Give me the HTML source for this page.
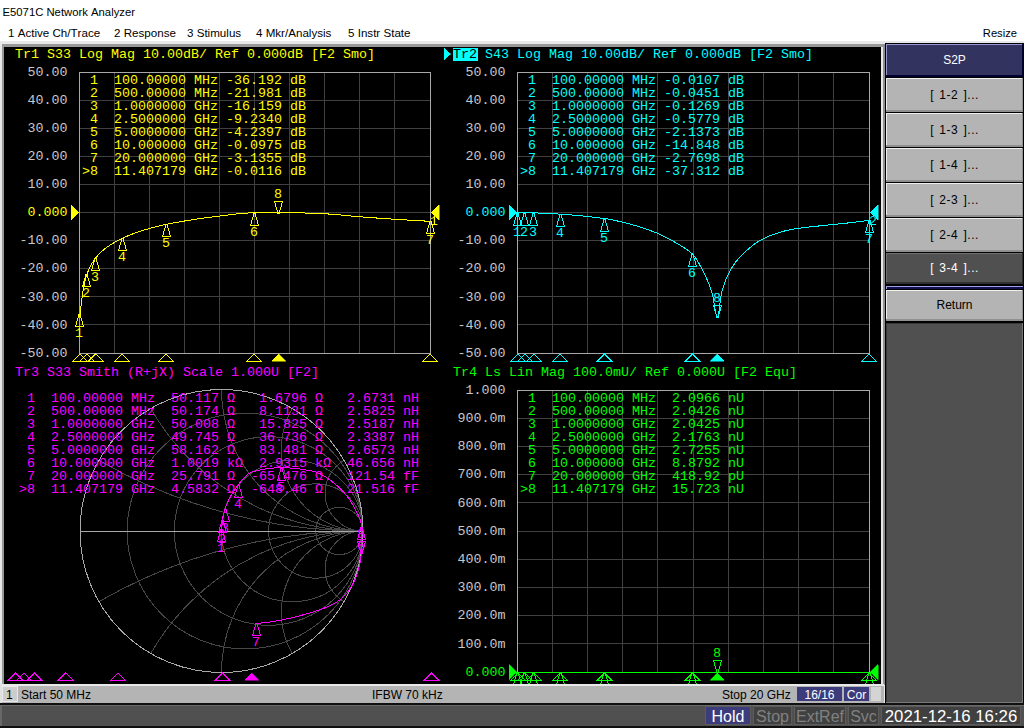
<!DOCTYPE html>
<html><head><meta charset="utf-8"><style>
html,body{margin:0;padding:0;background:#fff;width:1024px;height:728px;overflow:hidden}
svg{display:block}
text{font-kerning:none}
</style></head><body><svg width="1024" height="728" viewBox="0 0 1024 728" shape-rendering="crispEdges"><rect x="0" y="0" width="1024" height="728" fill="#ffffff" />
<rect x="0" y="41" width="1024" height="687" fill="#e8e8e8" />
<rect x="2" y="44" width="882" height="641" fill="#989898" />
<rect x="4" y="47" width="877" height="637" fill="#000000" />
<text x="2.5" y="16" fill="#000000" font-family="'Liberation Sans', sans-serif" font-size="11.3" text-anchor="start" xml:space="preserve" >E5071C Network Analyzer</text>
<text x="8" y="37" fill="#000000" font-family="'Liberation Sans', sans-serif" font-size="11.6" text-anchor="start" xml:space="preserve" >1 Active Ch/Trace</text>
<text x="114" y="37" fill="#000000" font-family="'Liberation Sans', sans-serif" font-size="11.6" text-anchor="start" xml:space="preserve" >2 Response</text>
<text x="187" y="37" fill="#000000" font-family="'Liberation Sans', sans-serif" font-size="11.6" text-anchor="start" xml:space="preserve" >3 Stimulus</text>
<text x="256" y="37" fill="#000000" font-family="'Liberation Sans', sans-serif" font-size="11.6" text-anchor="start" xml:space="preserve" >4 Mkr/Analysis</text>
<text x="348" y="37" fill="#000000" font-family="'Liberation Sans', sans-serif" font-size="11.6" text-anchor="start" xml:space="preserve" >5 Instr State</text>
<text x="1017" y="37" fill="#000000" font-family="'Liberation Sans', sans-serif" font-size="11.2" text-anchor="end" xml:space="preserve" >Resize</text>
<defs><clipPath id="clipdisp"><rect x="4" y="47" width="877" height="637"/></clipPath></defs>
<text x="15" y="58" fill="#ffff00" font-family="'Liberation Mono', monospace" font-size="13.333" text-anchor="start" xml:space="preserve" >Tr1 S33 Log Mag 10.00dB/ Ref 0.000dB [F2 Smo]</text>
<rect x="114" y="72" width="1" height="281" fill="#404040" />
<rect x="79" y="100" width="351" height="1" fill="#404040" />
<rect x="149" y="72" width="1" height="281" fill="#404040" />
<rect x="79" y="128" width="351" height="1" fill="#404040" />
<rect x="184" y="72" width="1" height="281" fill="#404040" />
<rect x="79" y="156" width="351" height="1" fill="#404040" />
<rect x="219" y="72" width="1" height="281" fill="#404040" />
<rect x="79" y="184" width="351" height="1" fill="#404040" />
<rect x="254" y="72" width="1" height="281" fill="#404040" />
<rect x="79" y="212" width="351" height="1" fill="#404040" />
<rect x="289" y="72" width="1" height="281" fill="#404040" />
<rect x="79" y="240" width="351" height="1" fill="#404040" />
<rect x="324" y="72" width="1" height="281" fill="#404040" />
<rect x="79" y="268" width="351" height="1" fill="#404040" />
<rect x="359" y="72" width="1" height="281" fill="#404040" />
<rect x="79" y="296" width="351" height="1" fill="#404040" />
<rect x="394" y="72" width="1" height="281" fill="#404040" />
<rect x="79" y="324" width="351" height="1" fill="#404040" />
<rect x="79" y="72" width="352" height="1" fill="#a8a8a8" />
<rect x="79" y="353" width="352" height="1" fill="#a8a8a8" />
<rect x="79" y="72" width="1" height="281" fill="#a8a8a8" />
<rect x="430" y="72" width="1" height="282" fill="#a8a8a8" />
<text x="67.5" y="75.7" fill="#c8c8c8" font-family="'Liberation Mono', monospace" font-size="13.333" text-anchor="end" xml:space="preserve" >50.00</text>
<text x="67.5" y="103.8" fill="#c8c8c8" font-family="'Liberation Mono', monospace" font-size="13.333" text-anchor="end" xml:space="preserve" >40.00</text>
<text x="67.5" y="131.89999999999998" fill="#c8c8c8" font-family="'Liberation Mono', monospace" font-size="13.333" text-anchor="end" xml:space="preserve" >30.00</text>
<text x="67.5" y="160.0" fill="#c8c8c8" font-family="'Liberation Mono', monospace" font-size="13.333" text-anchor="end" xml:space="preserve" >20.00</text>
<text x="67.5" y="188.1" fill="#c8c8c8" font-family="'Liberation Mono', monospace" font-size="13.333" text-anchor="end" xml:space="preserve" >10.00</text>
<text x="67.5" y="216.2" fill="#ffff00" font-family="'Liberation Mono', monospace" font-size="13.333" text-anchor="end" xml:space="preserve" >0.000</text>
<text x="67.5" y="244.29999999999998" fill="#c8c8c8" font-family="'Liberation Mono', monospace" font-size="13.333" text-anchor="end" xml:space="preserve" >-10.00</text>
<text x="67.5" y="272.4" fill="#c8c8c8" font-family="'Liberation Mono', monospace" font-size="13.333" text-anchor="end" xml:space="preserve" >-20.00</text>
<text x="67.5" y="300.5" fill="#c8c8c8" font-family="'Liberation Mono', monospace" font-size="13.333" text-anchor="end" xml:space="preserve" >-30.00</text>
<text x="67.5" y="328.59999999999997" fill="#c8c8c8" font-family="'Liberation Mono', monospace" font-size="13.333" text-anchor="end" xml:space="preserve" >-40.00</text>
<text x="67.5" y="356.7" fill="#c8c8c8" font-family="'Liberation Mono', monospace" font-size="13.333" text-anchor="end" xml:space="preserve" >-50.00</text>
<polygon points="71.00,205.00 71.00,220.00 79.00,212.50" fill="#ffff00" stroke="#ffff00" stroke-width="0.5"/>
<polygon points="439.00,205.00 439.00,220.00 431.00,212.50" fill="#ffff00" stroke="#ffff00" stroke-width="0.5"/>
<clipPath id="tri79"><polygon points="439,205.0 439,220.0 431,212.5"/></clipPath>
<mask id="mtri79"><rect x="0" y="0" width="1024" height="728" fill="#fff"/><polygon points="439,205.0 439,220.0 431,212.5" fill="#000"/></mask>
<text x="430" y="225.0" fill="#ffff00" font-family="'Liberation Mono', monospace" font-size="13.333" text-anchor="start" xml:space="preserve" mask="url(#mtri79)">1</text>
<text x="430" y="225.0" fill="#000000" font-family="'Liberation Mono', monospace" font-size="13.333" text-anchor="start" xml:space="preserve" clip-path="url(#tri79)">1</text>
<g clip-path="url(#clipdisp)">
<polyline points="79.00,316.47 79.50,315.38 80.00,313.75 80.50,310.57 81.00,306.54 81.50,302.40 82.00,298.44 82.50,294.76 83.00,291.40 83.50,288.34 84.00,285.58 84.50,283.10 85.00,280.86 85.50,278.86 86.00,277.07 86.50,275.47 87.00,274.04 87.50,272.72 88.00,271.47 88.50,270.28 89.00,269.15 89.50,268.07 90.00,267.04 90.50,266.06 91.00,265.12 91.50,264.22 92.00,263.35 92.50,262.53 93.00,261.73 93.50,260.97 94.00,260.23 94.50,259.52 95.00,258.84 95.50,258.18 96.00,257.55 96.50,256.93 97.00,256.34 97.50,255.76 98.00,255.20 98.50,254.65 99.00,254.12 99.50,253.61 100.00,253.11 100.50,252.62 101.00,252.14 101.50,251.68 102.00,251.22 102.50,250.78 103.00,250.35 103.50,249.92 104.00,249.51 104.50,249.10 105.00,248.71 105.50,248.32 106.00,247.94 106.50,247.56 107.00,247.19 107.50,246.83 108.00,246.48 108.50,246.13 109.00,245.79 109.50,245.46 110.00,245.13 110.50,244.80 111.00,244.48 111.50,244.17 112.00,243.86 112.50,243.55 113.00,243.25 113.50,242.96 114.00,242.67 114.50,242.38 115.00,242.10 115.50,241.82 116.00,241.54 116.50,241.27 117.00,241.00 117.50,240.74 118.00,240.48 118.50,240.22 119.00,239.96 119.50,239.71 120.00,239.46 120.50,239.22 121.00,238.97 121.50,238.73 122.00,238.50 122.50,238.26 123.00,238.03 123.50,237.80 124.00,237.57 124.50,237.35 125.00,237.13 125.50,236.90 126.00,236.69 126.50,236.47 127.00,236.26 127.50,236.05 128.00,235.84 128.50,235.63 129.00,235.42 129.50,235.22 130.00,235.02 130.50,234.82 131.00,234.62 131.50,234.43 132.00,234.23 132.50,234.04 133.00,233.85 133.50,233.66 134.00,233.48 134.50,233.29 135.00,233.11 135.50,232.93 136.00,232.75 136.50,232.57 137.00,232.40 137.50,232.22 138.00,232.05 138.50,231.88 139.00,231.71 139.50,231.54 140.00,231.37 140.50,231.21 141.00,231.05 141.50,230.88 142.00,230.72 142.50,230.56 143.00,230.41 143.50,230.25 144.00,230.10 144.50,229.94 145.00,229.79 145.50,229.64 146.00,229.49 146.50,229.34 147.00,229.19 147.50,229.05 148.00,228.90 148.50,228.76 149.00,228.62 149.50,228.48 150.00,228.34 150.50,228.20 151.00,228.06 151.50,227.93 152.00,227.79 152.50,227.66 153.00,227.53 153.50,227.40 154.00,227.26 154.50,227.14 155.00,227.01 155.50,226.88 156.00,226.75 156.50,226.63 157.00,226.50 157.50,226.38 158.00,226.26 158.50,226.14 159.00,226.02 159.50,225.90 160.00,225.78 160.50,225.66 161.00,225.55 161.50,225.43 162.00,225.32 162.50,225.20 163.00,225.09 163.50,224.98 164.00,224.87 164.50,224.76 165.00,224.65 165.50,224.54 166.00,224.43 166.50,224.33 167.00,224.22 167.50,224.12 168.00,224.01 168.50,223.91 169.00,223.81 169.50,223.71 170.00,223.61 170.50,223.51 171.00,223.41 171.50,223.32 172.00,223.22 172.50,223.13 173.00,223.03 173.50,222.94 174.00,222.85 174.50,222.75 175.00,222.66 175.50,222.57 176.00,222.48 176.50,222.39 177.00,222.30 177.50,222.21 178.00,222.12 178.50,222.03 179.00,221.95 179.50,221.86 180.00,221.77 180.50,221.68 181.00,221.60 181.50,221.51 182.00,221.43 182.50,221.34 183.00,221.26 183.50,221.17 184.00,221.09 184.50,221.01 185.00,220.92 185.50,220.84 186.00,220.76 186.50,220.68 187.00,220.59 187.50,220.51 188.00,220.43 188.50,220.35 189.00,220.27 189.50,220.19 190.00,220.11 190.50,220.03 191.00,219.96 191.50,219.88 192.00,219.80 192.50,219.72 193.00,219.65 193.50,219.57 194.00,219.49 194.50,219.42 195.00,219.34 195.50,219.27 196.00,219.19 196.50,219.12 197.00,219.05 197.50,218.97 198.00,218.90 198.50,218.83 199.00,218.76 199.50,218.68 200.00,218.61 200.50,218.54 201.00,218.47 201.50,218.40 202.00,218.33 202.50,218.26 203.00,218.19 203.50,218.12 204.00,218.06 204.50,217.99 205.00,217.92 205.50,217.85 206.00,217.79 206.50,217.72 207.00,217.65 207.50,217.59 208.00,217.52 208.50,217.46 209.00,217.39 209.50,217.33 210.00,217.26 210.50,217.20 211.00,217.14 211.50,217.08 212.00,217.01 212.50,216.95 213.00,216.89 213.50,216.83 214.00,216.77 214.50,216.71 215.00,216.65 215.50,216.59 216.00,216.53 216.50,216.47 217.00,216.41 217.50,216.35 218.00,216.29 218.50,216.23 219.00,216.17 219.50,216.11 220.00,216.05 220.50,215.99 221.00,215.93 221.50,215.87 222.00,215.80 222.50,215.74 223.00,215.68 223.50,215.61 224.00,215.55 224.50,215.48 225.00,215.42 225.50,215.35 226.00,215.29 226.50,215.22 227.00,215.16 227.50,215.09 228.00,215.03 228.50,214.96 229.00,214.90 229.50,214.83 230.00,214.77 230.50,214.70 231.00,214.64 231.50,214.58 232.00,214.52 232.50,214.45 233.00,214.39 233.50,214.33 234.00,214.27 234.50,214.21 235.00,214.16 235.50,214.10 236.00,214.04 236.50,213.99 237.00,213.93 237.50,213.88 238.00,213.82 238.50,213.77 239.00,213.72 239.50,213.67 240.00,213.62 240.50,213.57 241.00,213.52 241.50,213.48 242.00,213.43 242.50,213.39 243.00,213.35 243.50,213.31 244.00,213.27 244.50,213.23 245.00,213.19 245.50,213.16 246.00,213.12 246.50,213.09 247.00,213.06 247.50,213.03 248.00,213.00 248.50,212.97 249.00,212.95 249.50,212.92 250.00,212.90 250.50,212.88 251.00,212.86 251.50,212.84 252.00,212.82 252.50,212.81 253.00,212.80 253.50,212.78 254.00,212.78 254.50,212.77 255.00,212.76 255.50,212.75 256.00,212.74 256.50,212.73 257.00,212.72 257.50,212.72 258.00,212.71 258.50,212.70 259.00,212.69 259.50,212.69 260.00,212.68 260.50,212.67 261.00,212.66 261.50,212.66 262.00,212.65 262.50,212.64 263.00,212.64 263.50,212.63 264.00,212.63 264.50,212.62 265.00,212.61 265.50,212.61 266.00,212.60 266.50,212.60 267.00,212.59 267.50,212.59 268.00,212.58 268.50,212.58 269.00,212.57 269.50,212.57 270.00,212.57 270.50,212.56 271.00,212.56 271.50,212.56 272.00,212.55 272.50,212.55 273.00,212.55 273.50,212.55 274.00,212.54 274.50,212.54 275.00,212.54 275.50,212.54 276.00,212.54 276.50,212.54 277.00,212.53 277.50,212.53 278.00,212.53 278.50,212.53 279.00,212.53 279.50,212.53 280.00,212.53 280.50,212.54 281.00,212.54 281.50,212.54 282.00,212.55 282.50,212.55 283.00,212.56 283.50,212.56 284.00,212.57 284.50,212.57 285.00,212.58 285.50,212.59 286.00,212.59 286.50,212.60 287.00,212.61 287.50,212.62 288.00,212.63 288.50,212.64 289.00,212.65 289.50,212.66 290.00,212.67 290.50,212.68 291.00,212.69 291.50,212.70 292.00,212.71 292.50,212.72 293.00,212.73 293.50,212.74 294.00,212.75 294.50,212.76 295.00,212.77 295.50,212.78 296.00,212.79 296.50,212.80 297.00,212.81 297.50,212.83 298.00,212.84 298.50,212.85 299.00,212.86 299.50,212.87 300.00,212.88 300.50,212.89 301.00,212.91 301.50,212.92 302.00,212.93 302.50,212.94 303.00,212.96 303.50,212.97 304.00,212.98 304.50,213.00 305.00,213.01 305.50,213.03 306.00,213.04 306.50,213.06 307.00,213.07 307.50,213.09 308.00,213.11 308.50,213.12 309.00,213.14 309.50,213.16 310.00,213.17 310.50,213.19 311.00,213.21 311.50,213.23 312.00,213.24 312.50,213.26 313.00,213.28 313.50,213.30 314.00,213.32 314.50,213.34 315.00,213.36 315.50,213.38 316.00,213.40 316.50,213.42 317.00,213.44 317.50,213.46 318.00,213.48 318.50,213.50 319.00,213.53 319.50,213.55 320.00,213.57 320.50,213.59 321.00,213.61 321.50,213.64 322.00,213.66 322.50,213.68 323.00,213.71 323.50,213.73 324.00,213.75 324.50,213.78 325.00,213.80 325.50,213.83 326.00,213.86 326.50,213.88 327.00,213.91 327.50,213.94 328.00,213.97 328.50,214.01 329.00,214.04 329.50,214.07 330.00,214.11 330.50,214.14 331.00,214.18 331.50,214.22 332.00,214.26 332.50,214.30 333.00,214.34 333.50,214.38 334.00,214.42 334.50,214.46 335.00,214.50 335.50,214.55 336.00,214.59 336.50,214.63 337.00,214.68 337.50,214.72 338.00,214.77 338.50,214.82 339.00,214.86 339.50,214.91 340.00,214.95 340.50,215.00 341.00,215.05 341.50,215.10 342.00,215.14 342.50,215.19 343.00,215.24 343.50,215.29 344.00,215.34 344.50,215.39 345.00,215.43 345.50,215.48 346.00,215.53 346.50,215.58 347.00,215.63 347.50,215.68 348.00,215.72 348.50,215.77 349.00,215.82 349.50,215.87 350.00,215.91 350.50,215.96 351.00,216.01 351.50,216.06 352.00,216.10 352.50,216.15 353.00,216.19 353.50,216.24 354.00,216.28 354.50,216.33 355.00,216.37 355.50,216.42 356.00,216.46 356.50,216.50 357.00,216.54 357.50,216.59 358.00,216.63 358.50,216.67 359.00,216.71 359.50,216.75 360.00,216.79 360.50,216.83 361.00,216.86 361.50,216.90 362.00,216.94 362.50,216.98 363.00,217.02 363.50,217.06 364.00,217.09 364.50,217.13 365.00,217.17 365.50,217.21 366.00,217.24 366.50,217.28 367.00,217.32 367.50,217.35 368.00,217.39 368.50,217.43 369.00,217.47 369.50,217.50 370.00,217.54 370.50,217.58 371.00,217.61 371.50,217.65 372.00,217.69 372.50,217.72 373.00,217.76 373.50,217.79 374.00,217.83 374.50,217.87 375.00,217.90 375.50,217.94 376.00,217.97 376.50,218.01 377.00,218.04 377.50,218.08 378.00,218.11 378.50,218.15 379.00,218.18 379.50,218.22 380.00,218.25 380.50,218.29 381.00,218.32 381.50,218.36 382.00,218.39 382.50,218.43 383.00,218.46 383.50,218.49 384.00,218.53 384.50,218.56 385.00,218.60 385.50,218.63 386.00,218.66 386.50,218.70 387.00,218.73 387.50,218.76 388.00,218.80 388.50,218.83 389.00,218.86 389.50,218.90 390.00,218.93 390.50,218.96 391.00,219.00 391.50,219.03 392.00,219.06 392.50,219.09 393.00,219.13 393.50,219.16 394.00,219.19 394.50,219.22 395.00,219.26 395.50,219.29 396.00,219.32 396.50,219.35 397.00,219.38 397.50,219.42 398.00,219.45 398.50,219.48 399.00,219.51 399.50,219.54 400.00,219.57 400.50,219.60 401.00,219.63 401.50,219.67 402.00,219.70 402.50,219.73 403.00,219.76 403.50,219.79 404.00,219.82 404.50,219.85 405.00,219.88 405.50,219.91 406.00,219.94 406.50,219.97 407.00,220.00 407.50,220.03 408.00,220.06 408.50,220.09 409.00,220.12 409.50,220.15 410.00,220.18 410.50,220.21 411.00,220.24 411.50,220.27 412.00,220.30 412.50,220.33 413.00,220.36 413.50,220.39 414.00,220.42 414.50,220.45 415.00,220.47 415.50,220.50 416.00,220.53 416.50,220.56 417.00,220.59 417.50,220.62 418.00,220.65 418.50,220.67 419.00,220.70 419.50,220.73 420.00,220.76 420.50,220.79 421.00,220.82 421.50,220.84 422.00,220.87 422.50,220.90 423.00,220.93 423.50,220.96 424.00,220.98 424.50,221.01 425.00,221.04 425.50,221.07 426.00,221.09 426.50,221.12 427.00,221.15 427.50,221.18 428.00,221.20 428.50,221.23 429.00,221.26 429.50,221.28 430.00,221.31" fill="none" stroke="#ffff00" stroke-width="1" />
</g>
<polygon points="79.00,314.50 80.00,314.50 83.50,326.50 75.50,326.50" fill="none" stroke="#ffff00" stroke-width="1"/>
<text x="79" y="337" fill="#ffff00" font-family="'Liberation Mono', monospace" font-size="13.333" text-anchor="middle" xml:space="preserve" >1</text>
<polygon points="86.00,274.50 87.00,274.50 90.50,286.50 82.50,286.50" fill="none" stroke="#ffff00" stroke-width="1"/>
<text x="86" y="297" fill="#ffff00" font-family="'Liberation Mono', monospace" font-size="13.333" text-anchor="middle" xml:space="preserve" >2</text>
<polygon points="95.00,258.50 96.00,258.50 99.50,270.50 91.50,270.50" fill="none" stroke="#ffff00" stroke-width="1"/>
<text x="95" y="281" fill="#ffff00" font-family="'Liberation Mono', monospace" font-size="13.333" text-anchor="middle" xml:space="preserve" >3</text>
<polygon points="122.00,238.50 123.00,238.50 126.50,250.50 118.50,250.50" fill="none" stroke="#ffff00" stroke-width="1"/>
<text x="122" y="261" fill="#ffff00" font-family="'Liberation Mono', monospace" font-size="13.333" text-anchor="middle" xml:space="preserve" >4</text>
<polygon points="166.00,224.50 167.00,224.50 170.50,236.50 162.50,236.50" fill="none" stroke="#ffff00" stroke-width="1"/>
<text x="166" y="247" fill="#ffff00" font-family="'Liberation Mono', monospace" font-size="13.333" text-anchor="middle" xml:space="preserve" >5</text>
<polygon points="254.00,213.50 255.00,213.50 258.50,225.50 250.50,225.50" fill="none" stroke="#ffff00" stroke-width="1"/>
<text x="254" y="236" fill="#ffff00" font-family="'Liberation Mono', monospace" font-size="13.333" text-anchor="middle" xml:space="preserve" >6</text>
<polygon points="430.00,221.50 431.00,221.50 434.50,233.50 426.50,233.50" fill="none" stroke="#ffff00" stroke-width="1"/>
<text x="430" y="244" fill="#ffff00" font-family="'Liberation Mono', monospace" font-size="13.333" text-anchor="middle" xml:space="preserve" >7</text>
<polygon points="278.00,213.50 279.00,213.50 282.50,201.50 274.50,201.50" fill="none" stroke="#ffff00" stroke-width="1"/>
<text x="278" y="198" fill="#ffff00" font-family="'Liberation Mono', monospace" font-size="13.333" text-anchor="middle" xml:space="preserve" >8</text>
<polygon points="79.88,354.00 86.88,361.00 72.88,361.00" fill="none" stroke="#ffff00" stroke-width="1"/>
<polygon points="86.92,354.00 93.92,361.00 79.92,361.00" fill="none" stroke="#ffff00" stroke-width="1"/>
<polygon points="95.71,354.00 102.71,361.00 88.71,361.00" fill="none" stroke="#ffff00" stroke-width="1"/>
<polygon points="122.11,354.00 129.11,361.00 115.11,361.00" fill="none" stroke="#ffff00" stroke-width="1"/>
<polygon points="166.09,354.00 173.09,361.00 159.09,361.00" fill="none" stroke="#ffff00" stroke-width="1"/>
<polygon points="254.06,354.00 261.06,361.00 247.06,361.00" fill="none" stroke="#ffff00" stroke-width="1"/>
<polygon points="430.00,354.00 437.00,361.00 423.00,361.00" fill="none" stroke="#ffff00" stroke-width="1"/>
<polygon points="278.82,354.00 285.82,361.00 271.82,361.00" fill="#ffff00" stroke="#ffff00" stroke-width="0.5"/>
<text x="82" y="84" fill="#ffff00" font-family="'Liberation Mono', monospace" font-size="13.333" text-anchor="start" xml:space="preserve" > 1  100.00000 MHz -36.192 dB</text>
<text x="82" y="97" fill="#ffff00" font-family="'Liberation Mono', monospace" font-size="13.333" text-anchor="start" xml:space="preserve" > 2  500.00000 MHz -21.981 dB</text>
<text x="82" y="110" fill="#ffff00" font-family="'Liberation Mono', monospace" font-size="13.333" text-anchor="start" xml:space="preserve" > 3  1.0000000 GHz -16.159 dB</text>
<text x="82" y="123" fill="#ffff00" font-family="'Liberation Mono', monospace" font-size="13.333" text-anchor="start" xml:space="preserve" > 4  2.5000000 GHz -9.2340 dB</text>
<text x="82" y="136" fill="#ffff00" font-family="'Liberation Mono', monospace" font-size="13.333" text-anchor="start" xml:space="preserve" > 5  5.0000000 GHz -4.2397 dB</text>
<text x="82" y="149" fill="#ffff00" font-family="'Liberation Mono', monospace" font-size="13.333" text-anchor="start" xml:space="preserve" > 6  10.000000 GHz -0.0975 dB</text>
<text x="82" y="162" fill="#ffff00" font-family="'Liberation Mono', monospace" font-size="13.333" text-anchor="start" xml:space="preserve" > 7  20.000000 GHz -3.1355 dB</text>
<text x="82" y="175" fill="#ffff00" font-family="'Liberation Mono', monospace" font-size="13.333" text-anchor="start" xml:space="preserve" >&gt;8  11.407179 GHz -0.0116 dB</text>
<polygon points="444.00,48.00 444.00,60.00 450.50,54.00" fill="#00ffff" stroke="#00ffff" stroke-width="0.5"/>
<rect x="453" y="48" width="25" height="13" fill="#00ffff" />
<text x="453" y="58" fill="#000000" font-family="'Liberation Mono', monospace" font-size="13.333" text-anchor="start" xml:space="preserve" >Tr2</text>
<text x="485" y="58" fill="#00ffff" font-family="'Liberation Mono', monospace" font-size="13.333" text-anchor="start" xml:space="preserve" >S43 Log Mag 10.00dB/ Ref 0.000dB [F2 Smo]</text>
<rect x="552" y="72" width="1" height="281" fill="#404040" />
<rect x="517" y="100" width="352" height="1" fill="#404040" />
<rect x="587" y="72" width="1" height="281" fill="#404040" />
<rect x="517" y="128" width="352" height="1" fill="#404040" />
<rect x="622" y="72" width="1" height="281" fill="#404040" />
<rect x="517" y="156" width="352" height="1" fill="#404040" />
<rect x="657" y="72" width="1" height="281" fill="#404040" />
<rect x="517" y="184" width="352" height="1" fill="#404040" />
<rect x="693" y="72" width="1" height="281" fill="#404040" />
<rect x="517" y="212" width="352" height="1" fill="#404040" />
<rect x="728" y="72" width="1" height="281" fill="#404040" />
<rect x="517" y="240" width="352" height="1" fill="#404040" />
<rect x="763" y="72" width="1" height="281" fill="#404040" />
<rect x="517" y="268" width="352" height="1" fill="#404040" />
<rect x="798" y="72" width="1" height="281" fill="#404040" />
<rect x="517" y="296" width="352" height="1" fill="#404040" />
<rect x="833" y="72" width="1" height="281" fill="#404040" />
<rect x="517" y="324" width="352" height="1" fill="#404040" />
<rect x="517" y="72" width="353" height="1" fill="#a8a8a8" />
<rect x="517" y="353" width="353" height="1" fill="#a8a8a8" />
<rect x="517" y="72" width="1" height="281" fill="#a8a8a8" />
<rect x="869" y="72" width="1" height="282" fill="#a8a8a8" />
<text x="505.5" y="75.7" fill="#c8c8c8" font-family="'Liberation Mono', monospace" font-size="13.333" text-anchor="end" xml:space="preserve" >50.00</text>
<text x="505.5" y="103.8" fill="#c8c8c8" font-family="'Liberation Mono', monospace" font-size="13.333" text-anchor="end" xml:space="preserve" >40.00</text>
<text x="505.5" y="131.89999999999998" fill="#c8c8c8" font-family="'Liberation Mono', monospace" font-size="13.333" text-anchor="end" xml:space="preserve" >30.00</text>
<text x="505.5" y="160.0" fill="#c8c8c8" font-family="'Liberation Mono', monospace" font-size="13.333" text-anchor="end" xml:space="preserve" >20.00</text>
<text x="505.5" y="188.1" fill="#c8c8c8" font-family="'Liberation Mono', monospace" font-size="13.333" text-anchor="end" xml:space="preserve" >10.00</text>
<text x="505.5" y="216.2" fill="#00ffff" font-family="'Liberation Mono', monospace" font-size="13.333" text-anchor="end" xml:space="preserve" >0.000</text>
<text x="505.5" y="244.29999999999998" fill="#c8c8c8" font-family="'Liberation Mono', monospace" font-size="13.333" text-anchor="end" xml:space="preserve" >-10.00</text>
<text x="505.5" y="272.4" fill="#c8c8c8" font-family="'Liberation Mono', monospace" font-size="13.333" text-anchor="end" xml:space="preserve" >-20.00</text>
<text x="505.5" y="300.5" fill="#c8c8c8" font-family="'Liberation Mono', monospace" font-size="13.333" text-anchor="end" xml:space="preserve" >-30.00</text>
<text x="505.5" y="328.59999999999997" fill="#c8c8c8" font-family="'Liberation Mono', monospace" font-size="13.333" text-anchor="end" xml:space="preserve" >-40.00</text>
<text x="505.5" y="356.7" fill="#c8c8c8" font-family="'Liberation Mono', monospace" font-size="13.333" text-anchor="end" xml:space="preserve" >-50.00</text>
<polygon points="509.00,205.00 509.00,220.00 517.00,212.50" fill="#00ffff" stroke="#00ffff" stroke-width="0.5"/>
<polygon points="878.00,205.00 878.00,220.00 870.00,212.50" fill="#00ffff" stroke="#00ffff" stroke-width="0.5"/>
<clipPath id="tri517"><polygon points="878,205.0 878,220.0 870,212.5"/></clipPath>
<mask id="mtri517"><rect x="0" y="0" width="1024" height="728" fill="#fff"/><polygon points="878,205.0 878,220.0 870,212.5" fill="#000"/></mask>
<text x="869" y="225.0" fill="#00ffff" font-family="'Liberation Mono', monospace" font-size="13.333" text-anchor="start" xml:space="preserve" mask="url(#mtri517)">2</text>
<text x="869" y="225.0" fill="#000000" font-family="'Liberation Mono', monospace" font-size="13.333" text-anchor="start" xml:space="preserve" clip-path="url(#tri517)">2</text>
<g clip-path="url(#clipdisp)">
<polyline points="517.00,212.51 517.50,212.52 518.00,212.53 518.50,212.54 519.00,212.55 519.50,212.55 520.00,212.56 520.50,212.57 521.00,212.57 521.50,212.58 522.00,212.59 522.50,212.60 523.00,212.60 523.50,212.61 524.00,212.61 524.50,212.62 525.00,212.63 525.50,212.63 526.00,212.64 526.50,212.65 527.00,212.67 527.50,212.68 528.00,212.69 528.50,212.70 529.00,212.72 529.50,212.73 530.00,212.75 530.50,212.76 531.00,212.77 531.50,212.79 532.00,212.80 532.50,212.82 533.00,212.83 533.50,212.85 534.00,212.86 534.50,212.88 535.00,212.90 535.50,212.91 536.00,212.93 536.50,212.95 537.00,212.97 537.50,212.99 538.00,213.01 538.50,213.03 539.00,213.05 539.50,213.07 540.00,213.09 540.50,213.12 541.00,213.14 541.50,213.16 542.00,213.19 542.50,213.21 543.00,213.23 543.50,213.26 544.00,213.28 544.50,213.31 545.00,213.33 545.50,213.36 546.00,213.38 546.50,213.41 547.00,213.43 547.50,213.46 548.00,213.48 548.50,213.51 549.00,213.53 549.50,213.56 550.00,213.58 550.50,213.61 551.00,213.64 551.50,213.66 552.00,213.69 552.50,213.72 553.00,213.74 553.50,213.77 554.00,213.79 554.50,213.82 555.00,213.85 555.50,213.87 556.00,213.90 556.50,213.93 557.00,213.95 557.50,213.98 558.00,214.01 558.50,214.03 559.00,214.06 559.50,214.09 560.00,214.11 560.50,214.14 561.00,214.17 561.50,214.19 562.00,214.22 562.50,214.25 563.00,214.29 563.50,214.32 564.00,214.35 564.50,214.38 565.00,214.42 565.50,214.46 566.00,214.49 566.50,214.53 567.00,214.57 567.50,214.60 568.00,214.64 568.50,214.68 569.00,214.72 569.50,214.76 570.00,214.81 570.50,214.85 571.00,214.89 571.50,214.93 572.00,214.98 572.50,215.02 573.00,215.07 573.50,215.11 574.00,215.16 574.50,215.20 575.00,215.25 575.50,215.30 576.00,215.35 576.50,215.39 577.00,215.44 577.50,215.49 578.00,215.54 578.50,215.59 579.00,215.64 579.50,215.69 580.00,215.74 580.50,215.79 581.00,215.84 581.50,215.90 582.00,215.95 582.50,216.00 583.00,216.05 583.50,216.11 584.00,216.16 584.50,216.21 585.00,216.27 585.50,216.32 586.00,216.38 586.50,216.43 587.00,216.49 587.50,216.54 588.00,216.60 588.50,216.65 589.00,216.71 589.50,216.76 590.00,216.82 590.50,216.88 591.00,216.93 591.50,216.99 592.00,217.05 592.50,217.10 593.00,217.16 593.50,217.22 594.00,217.28 594.50,217.34 595.00,217.39 595.50,217.45 596.00,217.51 596.50,217.57 597.00,217.63 597.50,217.69 598.00,217.75 598.50,217.81 599.00,217.86 599.50,217.92 600.00,217.98 600.50,218.04 601.00,218.10 601.50,218.16 602.00,218.22 602.50,218.28 603.00,218.34 603.50,218.40 604.00,218.46 604.50,218.53 605.00,218.59 605.50,218.66 606.00,218.73 606.50,218.80 607.00,218.88 607.50,218.96 608.00,219.04 608.50,219.12 609.00,219.21 609.50,219.30 610.00,219.39 610.50,219.49 611.00,219.59 611.50,219.69 612.00,219.79 612.50,219.89 613.00,219.99 613.50,220.10 614.00,220.21 614.50,220.32 615.00,220.43 615.50,220.54 616.00,220.65 616.50,220.77 617.00,220.88 617.50,221.00 618.00,221.12 618.50,221.24 619.00,221.36 619.50,221.48 620.00,221.60 620.50,221.72 621.00,221.84 621.50,221.97 622.00,222.09 622.50,222.21 623.00,222.34 623.50,222.46 624.00,222.58 624.50,222.71 625.00,222.83 625.50,222.96 626.00,223.08 626.50,223.21 627.00,223.33 627.50,223.46 628.00,223.59 628.50,223.71 629.00,223.84 629.50,223.97 630.00,224.10 630.50,224.24 631.00,224.37 631.50,224.51 632.00,224.65 632.50,224.78 633.00,224.92 633.50,225.07 634.00,225.21 634.50,225.35 635.00,225.50 635.50,225.65 636.00,225.79 636.50,225.94 637.00,226.09 637.50,226.25 638.00,226.40 638.50,226.55 639.00,226.71 639.50,226.87 640.00,227.03 640.50,227.19 641.00,227.35 641.50,227.51 642.00,227.67 642.50,227.84 643.00,228.00 643.50,228.17 644.00,228.34 644.50,228.51 645.00,228.68 645.50,228.85 646.00,229.03 646.50,229.20 647.00,229.38 647.50,229.55 648.00,229.73 648.50,229.91 649.00,230.09 649.50,230.27 650.00,230.46 650.50,230.64 651.00,230.82 651.50,231.01 652.00,231.20 652.50,231.39 653.00,231.58 653.50,231.77 654.00,231.96 654.50,232.15 655.00,232.34 655.50,232.54 656.00,232.74 656.50,232.95 657.00,233.15 657.50,233.37 658.00,233.58 658.50,233.79 659.00,234.01 659.50,234.24 660.00,234.46 660.50,234.69 661.00,234.92 661.50,235.15 662.00,235.39 662.50,235.62 663.00,235.87 663.50,236.11 664.00,236.35 664.50,236.60 665.00,236.85 665.50,237.10 666.00,237.36 666.50,237.61 667.00,237.87 667.50,238.13 668.00,238.39 668.50,238.66 669.00,238.93 669.50,239.19 670.00,239.46 670.50,239.74 671.00,240.01 671.50,240.28 672.00,240.56 672.50,240.84 673.00,241.12 673.50,241.40 674.00,241.69 674.50,241.97 675.00,242.26 675.50,242.55 676.00,242.83 676.50,243.13 677.00,243.42 677.50,243.71 678.00,244.01 678.50,244.30 679.00,244.60 679.50,244.90 680.00,245.20 680.50,245.50 681.00,245.80 681.50,246.10 682.00,246.41 682.50,246.71 683.00,247.01 683.50,247.32 684.00,247.63 684.50,247.94 685.00,248.25 685.50,248.57 686.00,248.90 686.50,249.24 687.00,249.58 687.50,249.93 688.00,250.30 688.50,250.67 689.00,251.06 689.50,251.45 690.00,251.87 690.50,252.29 691.00,252.74 691.50,253.19 692.00,253.67 692.50,254.16 693.00,254.68 693.50,255.25 694.00,255.85 694.50,256.49 695.00,257.16 695.50,257.87 696.00,258.61 696.50,259.37 697.00,260.17 697.50,260.99 698.00,261.83 698.50,262.70 699.00,263.58 699.50,264.48 700.00,265.40 700.50,266.34 701.00,267.28 701.50,268.24 702.00,269.21 702.50,270.18 703.00,271.17 703.50,272.15 704.00,273.14 704.50,274.14 705.00,275.14 705.50,276.16 706.00,277.20 706.50,278.27 707.00,279.36 707.50,280.49 708.00,281.65 708.50,282.85 709.00,284.10 709.50,285.39 710.00,286.73 710.50,288.13 711.00,289.59 711.50,291.11 712.00,292.69 712.50,294.66 713.00,297.16 713.50,300.01 714.00,303.06 714.50,306.16 715.00,309.15 715.50,311.89 716.00,314.22 716.50,316.00 717.00,317.08 717.50,317.30 718.00,316.23 718.50,313.94 719.00,310.79 719.50,307.10 720.00,303.19 720.50,299.37 721.00,295.97 721.50,293.28 722.00,291.39 722.50,289.63 723.00,287.95 723.50,286.35 724.00,284.82 724.50,283.35 725.00,281.95 725.50,280.61 726.00,279.33 726.50,278.11 727.00,276.93 727.50,275.81 728.00,274.73 728.50,273.69 729.00,272.69 729.50,271.74 730.00,270.81 730.50,269.92 731.00,269.05 731.50,268.21 732.00,267.40 732.50,266.61 733.00,265.84 733.50,265.09 734.00,264.37 734.50,263.66 735.00,262.98 735.50,262.31 736.00,261.66 736.50,261.02 737.00,260.41 737.50,259.81 738.00,259.22 738.50,258.64 739.00,258.08 739.50,257.53 740.00,257.00 740.50,256.47 741.00,255.95 741.50,255.44 742.00,254.94 742.50,254.45 743.00,253.97 743.50,253.49 744.00,253.02 744.50,252.55 745.00,252.09 745.50,251.63 746.00,251.17 746.50,250.72 747.00,250.27 747.50,249.83 748.00,249.39 748.50,248.95 749.00,248.52 749.50,248.10 750.00,247.68 750.50,247.26 751.00,246.85 751.50,246.44 752.00,246.04 752.50,245.65 753.00,245.26 753.50,244.88 754.00,244.50 754.50,244.13 755.00,243.76 755.50,243.40 756.00,243.05 756.50,242.71 757.00,242.37 757.50,242.03 758.00,241.71 758.50,241.39 759.00,241.08 759.50,240.77 760.00,240.47 760.50,240.18 761.00,239.90 761.50,239.62 762.00,239.35 762.50,239.09 763.00,238.84 763.50,238.60 764.00,238.36 764.50,238.13 765.00,237.90 765.50,237.67 766.00,237.45 766.50,237.23 767.00,237.01 767.50,236.80 768.00,236.58 768.50,236.37 769.00,236.17 769.50,235.96 770.00,235.76 770.50,235.56 771.00,235.36 771.50,235.17 772.00,234.98 772.50,234.79 773.00,234.60 773.50,234.42 774.00,234.23 774.50,234.06 775.00,233.88 775.50,233.71 776.00,233.53 776.50,233.37 777.00,233.20 777.50,233.04 778.00,232.87 778.50,232.72 779.00,232.56 779.50,232.41 780.00,232.26 780.50,232.11 781.00,231.96 781.50,231.82 782.00,231.68 782.50,231.54 783.00,231.40 783.50,231.27 784.00,231.14 784.50,231.01 785.00,230.88 785.50,230.76 786.00,230.64 786.50,230.52 787.00,230.41 787.50,230.29 788.00,230.18 788.50,230.07 789.00,229.97 789.50,229.86 790.00,229.76 790.50,229.67 791.00,229.57 791.50,229.48 792.00,229.38 792.50,229.29 793.00,229.21 793.50,229.12 794.00,229.04 794.50,228.95 795.00,228.87 795.50,228.79 796.00,228.72 796.50,228.64 797.00,228.56 797.50,228.49 798.00,228.42 798.50,228.35 799.00,228.28 799.50,228.21 800.00,228.14 800.50,228.07 801.00,228.01 801.50,227.94 802.00,227.88 802.50,227.82 803.00,227.75 803.50,227.69 804.00,227.63 804.50,227.57 805.00,227.51 805.50,227.46 806.00,227.40 806.50,227.34 807.00,227.28 807.50,227.23 808.00,227.17 808.50,227.11 809.00,227.06 809.50,227.00 810.00,226.95 810.50,226.89 811.00,226.84 811.50,226.78 812.00,226.73 812.50,226.68 813.00,226.62 813.50,226.57 814.00,226.51 814.50,226.46 815.00,226.40 815.50,226.35 816.00,226.29 816.50,226.24 817.00,226.18 817.50,226.13 818.00,226.07 818.50,226.01 819.00,225.96 819.50,225.90 820.00,225.84 820.50,225.79 821.00,225.73 821.50,225.68 822.00,225.63 822.50,225.57 823.00,225.52 823.50,225.47 824.00,225.42 824.50,225.36 825.00,225.31 825.50,225.26 826.00,225.21 826.50,225.16 827.00,225.11 827.50,225.06 828.00,225.01 828.50,224.96 829.00,224.91 829.50,224.86 830.00,224.82 830.50,224.77 831.00,224.72 831.50,224.67 832.00,224.62 832.50,224.57 833.00,224.52 833.50,224.47 834.00,224.43 834.50,224.38 835.00,224.33 835.50,224.28 836.00,224.23 836.50,224.18 837.00,224.13 837.50,224.08 838.00,224.03 838.50,223.98 839.00,223.93 839.50,223.88 840.00,223.83 840.50,223.78 841.00,223.73 841.50,223.67 842.00,223.62 842.50,223.57 843.00,223.51 843.50,223.46 844.00,223.41 844.50,223.35 845.00,223.30 845.50,223.24 846.00,223.19 846.50,223.13 847.00,223.07 847.50,223.01 848.00,222.96 848.50,222.90 849.00,222.84 849.50,222.78 850.00,222.72 850.50,222.66 851.00,222.60 851.50,222.54 852.00,222.48 852.50,222.42 853.00,222.36 853.50,222.30 854.00,222.24 854.50,222.18 855.00,222.11 855.50,222.05 856.00,221.99 856.50,221.92 857.00,221.86 857.50,221.80 858.00,221.73 858.50,221.67 859.00,221.61 859.50,221.54 860.00,221.48 860.50,221.41 861.00,221.35 861.50,221.28 862.00,221.22 862.50,221.15 863.00,221.08 863.50,221.02 864.00,220.95 864.50,220.89 865.00,220.82 865.50,220.75 866.00,220.69 866.50,220.62 867.00,220.55 867.50,220.49 868.00,220.42 868.50,220.35 869.00,220.28" fill="none" stroke="#00ffff" stroke-width="1" />
</g>
<polygon points="517.00,213.50 518.00,213.50 521.50,225.50 513.50,225.50" fill="none" stroke="#00ffff" stroke-width="1"/>
<text x="517" y="236" fill="#00ffff" font-family="'Liberation Mono', monospace" font-size="13.333" text-anchor="middle" xml:space="preserve" >1</text>
<polygon points="524.00,213.50 525.00,213.50 528.50,225.50 520.50,225.50" fill="none" stroke="#00ffff" stroke-width="1"/>
<text x="524" y="236" fill="#00ffff" font-family="'Liberation Mono', monospace" font-size="13.333" text-anchor="middle" xml:space="preserve" >2</text>
<polygon points="533.00,213.50 534.00,213.50 537.50,225.50 529.50,225.50" fill="none" stroke="#00ffff" stroke-width="1"/>
<text x="533" y="236" fill="#00ffff" font-family="'Liberation Mono', monospace" font-size="13.333" text-anchor="middle" xml:space="preserve" >3</text>
<polygon points="560.00,214.50 561.00,214.50 564.50,226.50 556.50,226.50" fill="none" stroke="#00ffff" stroke-width="1"/>
<text x="560" y="237" fill="#00ffff" font-family="'Liberation Mono', monospace" font-size="13.333" text-anchor="middle" xml:space="preserve" >4</text>
<polygon points="604.00,219.50 605.00,219.50 608.50,231.50 600.50,231.50" fill="none" stroke="#00ffff" stroke-width="1"/>
<text x="604" y="242" fill="#00ffff" font-family="'Liberation Mono', monospace" font-size="13.333" text-anchor="middle" xml:space="preserve" >5</text>
<polygon points="692.00,254.50 693.00,254.50 696.50,266.50 688.50,266.50" fill="none" stroke="#00ffff" stroke-width="1"/>
<text x="692" y="277" fill="#00ffff" font-family="'Liberation Mono', monospace" font-size="13.333" text-anchor="middle" xml:space="preserve" >6</text>
<polygon points="869.00,220.50 870.00,220.50 873.50,232.50 865.50,232.50" fill="none" stroke="#00ffff" stroke-width="1"/>
<text x="869" y="243" fill="#00ffff" font-family="'Liberation Mono', monospace" font-size="13.333" text-anchor="middle" xml:space="preserve" >7</text>
<polygon points="717.00,317.50 718.00,317.50 721.50,305.50 713.50,305.50" fill="none" stroke="#00ffff" stroke-width="1"/>
<text x="717" y="302" fill="#00ffff" font-family="'Liberation Mono', monospace" font-size="13.333" text-anchor="middle" xml:space="preserve" >8</text>
<polygon points="517.88,354.00 524.88,361.00 510.88,361.00" fill="none" stroke="#00ffff" stroke-width="1"/>
<polygon points="524.94,354.00 531.94,361.00 517.94,361.00" fill="none" stroke="#00ffff" stroke-width="1"/>
<polygon points="533.76,354.00 540.76,361.00 526.76,361.00" fill="none" stroke="#00ffff" stroke-width="1"/>
<polygon points="560.23,354.00 567.23,361.00 553.23,361.00" fill="none" stroke="#00ffff" stroke-width="1"/>
<polygon points="604.34,354.00 611.34,361.00 597.34,361.00" fill="none" stroke="#00ffff" stroke-width="1"/>
<polygon points="692.56,354.00 699.56,361.00 685.56,361.00" fill="none" stroke="#00ffff" stroke-width="1"/>
<polygon points="869.00,354.00 876.00,361.00 862.00,361.00" fill="none" stroke="#00ffff" stroke-width="1"/>
<polygon points="717.39,354.00 724.39,361.00 710.39,361.00" fill="#00ffff" stroke="#00ffff" stroke-width="0.5"/>
<text x="520" y="84" fill="#00ffff" font-family="'Liberation Mono', monospace" font-size="13.333" text-anchor="start" xml:space="preserve" > 1  100.00000 MHz -0.0107 dB</text>
<text x="520" y="97" fill="#00ffff" font-family="'Liberation Mono', monospace" font-size="13.333" text-anchor="start" xml:space="preserve" > 2  500.00000 MHz -0.0451 dB</text>
<text x="520" y="110" fill="#00ffff" font-family="'Liberation Mono', monospace" font-size="13.333" text-anchor="start" xml:space="preserve" > 3  1.0000000 GHz -0.1269 dB</text>
<text x="520" y="123" fill="#00ffff" font-family="'Liberation Mono', monospace" font-size="13.333" text-anchor="start" xml:space="preserve" > 4  2.5000000 GHz -0.5779 dB</text>
<text x="520" y="136" fill="#00ffff" font-family="'Liberation Mono', monospace" font-size="13.333" text-anchor="start" xml:space="preserve" > 5  5.0000000 GHz -2.1373 dB</text>
<text x="520" y="149" fill="#00ffff" font-family="'Liberation Mono', monospace" font-size="13.333" text-anchor="start" xml:space="preserve" > 6  10.000000 GHz -14.848 dB</text>
<text x="520" y="162" fill="#00ffff" font-family="'Liberation Mono', monospace" font-size="13.333" text-anchor="start" xml:space="preserve" > 7  20.000000 GHz -2.7698 dB</text>
<text x="520" y="175" fill="#00ffff" font-family="'Liberation Mono', monospace" font-size="13.333" text-anchor="start" xml:space="preserve" >&gt;8  11.407179 GHz -37.312 dB</text>
<text x="453" y="376" fill="#00ff00" font-family="'Liberation Mono', monospace" font-size="13.333" text-anchor="start" xml:space="preserve" >Tr4 Ls Lin Mag 100.0mU/ Ref 0.000U [F2 Equ]</text>
<rect x="552" y="390" width="1" height="282" fill="#404040" />
<rect x="517" y="418" width="352" height="1" fill="#404040" />
<rect x="587" y="390" width="1" height="282" fill="#404040" />
<rect x="517" y="446" width="352" height="1" fill="#404040" />
<rect x="622" y="390" width="1" height="282" fill="#404040" />
<rect x="517" y="474" width="352" height="1" fill="#404040" />
<rect x="657" y="390" width="1" height="282" fill="#404040" />
<rect x="517" y="502" width="352" height="1" fill="#404040" />
<rect x="693" y="390" width="1" height="282" fill="#404040" />
<rect x="517" y="531" width="352" height="1" fill="#404040" />
<rect x="728" y="390" width="1" height="282" fill="#404040" />
<rect x="517" y="559" width="352" height="1" fill="#404040" />
<rect x="763" y="390" width="1" height="282" fill="#404040" />
<rect x="517" y="587" width="352" height="1" fill="#404040" />
<rect x="798" y="390" width="1" height="282" fill="#404040" />
<rect x="517" y="615" width="352" height="1" fill="#404040" />
<rect x="833" y="390" width="1" height="282" fill="#404040" />
<rect x="517" y="643" width="352" height="1" fill="#404040" />
<rect x="517" y="390" width="353" height="1" fill="#a8a8a8" />
<rect x="517" y="672" width="353" height="1" fill="#a8a8a8" />
<rect x="517" y="390" width="1" height="282" fill="#a8a8a8" />
<rect x="869" y="390" width="1" height="283" fill="#a8a8a8" />
<text x="505.5" y="393.7" fill="#c8c8c8" font-family="'Liberation Mono', monospace" font-size="13.333" text-anchor="end" xml:space="preserve" >1.000</text>
<text x="505.5" y="421.9" fill="#c8c8c8" font-family="'Liberation Mono', monospace" font-size="13.333" text-anchor="end" xml:space="preserve" >900.0m</text>
<text x="505.5" y="450.09999999999997" fill="#c8c8c8" font-family="'Liberation Mono', monospace" font-size="13.333" text-anchor="end" xml:space="preserve" >800.0m</text>
<text x="505.5" y="478.3" fill="#c8c8c8" font-family="'Liberation Mono', monospace" font-size="13.333" text-anchor="end" xml:space="preserve" >700.0m</text>
<text x="505.5" y="506.5" fill="#c8c8c8" font-family="'Liberation Mono', monospace" font-size="13.333" text-anchor="end" xml:space="preserve" >600.0m</text>
<text x="505.5" y="534.7" fill="#c8c8c8" font-family="'Liberation Mono', monospace" font-size="13.333" text-anchor="end" xml:space="preserve" >500.0m</text>
<text x="505.5" y="562.9000000000001" fill="#c8c8c8" font-family="'Liberation Mono', monospace" font-size="13.333" text-anchor="end" xml:space="preserve" >400.0m</text>
<text x="505.5" y="591.1" fill="#c8c8c8" font-family="'Liberation Mono', monospace" font-size="13.333" text-anchor="end" xml:space="preserve" >300.0m</text>
<text x="505.5" y="619.3000000000001" fill="#c8c8c8" font-family="'Liberation Mono', monospace" font-size="13.333" text-anchor="end" xml:space="preserve" >200.0m</text>
<text x="505.5" y="647.5" fill="#c8c8c8" font-family="'Liberation Mono', monospace" font-size="13.333" text-anchor="end" xml:space="preserve" >100.0m</text>
<text x="505.5" y="675.7" fill="#00ff00" font-family="'Liberation Mono', monospace" font-size="13.333" text-anchor="end" xml:space="preserve" >0.000</text>
<g clip-path="url(#clipdisp)">
<polygon points="509.00,664.50 509.00,679.50 517.00,672.00" fill="#00ff00" stroke="#00ff00" stroke-width="0.5"/>
<polygon points="878.00,664.50 878.00,679.50 870.00,672.00" fill="#00ff00" stroke="#00ff00" stroke-width="0.5"/>
<rect x="517" y="672" width="353" height="1" fill="#00ff00" />
<polygon points="517.00,672.50 518.00,672.50 521.50,684.50 513.50,684.50" fill="none" stroke="#00ff00" stroke-width="1"/>
<text x="517" y="695" fill="#00ff00" font-family="'Liberation Mono', monospace" font-size="13.333" text-anchor="middle" xml:space="preserve" >1</text>
<polygon points="524.00,672.50 525.00,672.50 528.50,684.50 520.50,684.50" fill="none" stroke="#00ff00" stroke-width="1"/>
<text x="524" y="695" fill="#00ff00" font-family="'Liberation Mono', monospace" font-size="13.333" text-anchor="middle" xml:space="preserve" >2</text>
<polygon points="533.00,672.50 534.00,672.50 537.50,684.50 529.50,684.50" fill="none" stroke="#00ff00" stroke-width="1"/>
<text x="533" y="695" fill="#00ff00" font-family="'Liberation Mono', monospace" font-size="13.333" text-anchor="middle" xml:space="preserve" >3</text>
<polygon points="560.00,672.50 561.00,672.50 564.50,684.50 556.50,684.50" fill="none" stroke="#00ff00" stroke-width="1"/>
<text x="560" y="695" fill="#00ff00" font-family="'Liberation Mono', monospace" font-size="13.333" text-anchor="middle" xml:space="preserve" >4</text>
<polygon points="604.00,672.50 605.00,672.50 608.50,684.50 600.50,684.50" fill="none" stroke="#00ff00" stroke-width="1"/>
<text x="604" y="695" fill="#00ff00" font-family="'Liberation Mono', monospace" font-size="13.333" text-anchor="middle" xml:space="preserve" >5</text>
<polygon points="692.00,672.50 693.00,672.50 696.50,684.50 688.50,684.50" fill="none" stroke="#00ff00" stroke-width="1"/>
<text x="692" y="695" fill="#00ff00" font-family="'Liberation Mono', monospace" font-size="13.333" text-anchor="middle" xml:space="preserve" >6</text>
<polygon points="869.00,672.50 870.00,672.50 873.50,684.50 865.50,684.50" fill="none" stroke="#00ff00" stroke-width="1"/>
<text x="869" y="695" fill="#00ff00" font-family="'Liberation Mono', monospace" font-size="13.333" text-anchor="middle" xml:space="preserve" >7</text>
<polygon points="717.00,672.50 718.00,672.50 721.50,660.50 713.50,660.50" fill="none" stroke="#00ff00" stroke-width="1"/>
<text x="717" y="657" fill="#00ff00" font-family="'Liberation Mono', monospace" font-size="13.333" text-anchor="middle" xml:space="preserve" >8</text>
<polygon points="517.88,673.00 524.88,680.00 510.88,680.00" fill="none" stroke="#00ff00" stroke-width="1"/>
<polygon points="524.94,673.00 531.94,680.00 517.94,680.00" fill="none" stroke="#00ff00" stroke-width="1"/>
<polygon points="533.76,673.00 540.76,680.00 526.76,680.00" fill="none" stroke="#00ff00" stroke-width="1"/>
<polygon points="560.23,673.00 567.23,680.00 553.23,680.00" fill="none" stroke="#00ff00" stroke-width="1"/>
<polygon points="604.34,673.00 611.34,680.00 597.34,680.00" fill="none" stroke="#00ff00" stroke-width="1"/>
<polygon points="692.56,673.00 699.56,680.00 685.56,680.00" fill="none" stroke="#00ff00" stroke-width="1"/>
<polygon points="869.00,673.00 876.00,680.00 862.00,680.00" fill="none" stroke="#00ff00" stroke-width="1"/>
<polygon points="717.39,673.00 724.39,680.00 710.39,680.00" fill="#00ff00" stroke="#00ff00" stroke-width="0.5"/>
</g>
<text x="520" y="402" fill="#00ff00" font-family="'Liberation Mono', monospace" font-size="13.333" text-anchor="start" xml:space="preserve" > 1  100.00000 MHz  2.0966 nU</text>
<text x="520" y="415" fill="#00ff00" font-family="'Liberation Mono', monospace" font-size="13.333" text-anchor="start" xml:space="preserve" > 2  500.00000 MHz  2.0426 nU</text>
<text x="520" y="428" fill="#00ff00" font-family="'Liberation Mono', monospace" font-size="13.333" text-anchor="start" xml:space="preserve" > 3  1.0000000 GHz  2.0425 nU</text>
<text x="520" y="441" fill="#00ff00" font-family="'Liberation Mono', monospace" font-size="13.333" text-anchor="start" xml:space="preserve" > 4  2.5000000 GHz  2.1763 nU</text>
<text x="520" y="454" fill="#00ff00" font-family="'Liberation Mono', monospace" font-size="13.333" text-anchor="start" xml:space="preserve" > 5  5.0000000 GHz  2.7255 nU</text>
<text x="520" y="467" fill="#00ff00" font-family="'Liberation Mono', monospace" font-size="13.333" text-anchor="start" xml:space="preserve" > 6  10.000000 GHz  8.8792 nU</text>
<text x="520" y="480" fill="#00ff00" font-family="'Liberation Mono', monospace" font-size="13.333" text-anchor="start" xml:space="preserve" > 7  20.000000 GHz  418.92 pU</text>
<text x="520" y="493" fill="#00ff00" font-family="'Liberation Mono', monospace" font-size="13.333" text-anchor="start" xml:space="preserve" >&gt;8  11.407179 GHz  15.723 nU</text>
<clipPath id="clipsmith"><circle cx="221.5" cy="531.0" r="141.5"/></clipPath>
<g clip-path="url(#clipsmith)" fill="none" stroke="#474747" stroke-width="1">
<circle cx="245.08" cy="531.0" r="117.92"/>
<circle cx="268.67" cy="531.0" r="94.33"/>
<circle cx="292.25" cy="531.0" r="70.75"/>
<circle cx="315.83" cy="531.0" r="47.17"/>
<circle cx="339.42" cy="531.0" r="23.58"/>
<circle cx="363.00" cy="493.09" r="37.91"/>
<circle cx="363.00" cy="568.91" r="37.91"/>
<circle cx="363.00" cy="449.30" r="81.70"/>
<circle cx="363.00" cy="612.70" r="81.70"/>
<circle cx="363.00" cy="389.50" r="141.50"/>
<circle cx="363.00" cy="672.50" r="141.50"/>
<circle cx="363.00" cy="285.91" r="245.09"/>
<circle cx="363.00" cy="776.09" r="245.09"/>
<circle cx="363.00" cy="2.91" r="528.09"/>
<circle cx="363.00" cy="1059.09" r="528.09"/>
</g>
<circle cx="221.5" cy="531.0" r="141.5" fill="none" stroke="#a8a8a8" stroke-width="1"/>
<rect x="80" y="531" width="283" height="1" fill="#a8a8a8" />
<text x="15" y="376" fill="#ff00ff" font-family="'Liberation Mono', monospace" font-size="13.333" text-anchor="start" xml:space="preserve" >Tr3 S33 Smith (R+jX) Scale 1.000U [F2]</text>
<text x="19" y="402" fill="#ff00ff" font-family="'Liberation Mono', monospace" font-size="13.333" text-anchor="start" xml:space="preserve" > 1  100.00000 MHz  50.117 Ω   1.6796 Ω   2.6731 nH</text>
<text x="19" y="415" fill="#ff00ff" font-family="'Liberation Mono', monospace" font-size="13.333" text-anchor="start" xml:space="preserve" > 2  500.00000 MHz  50.174 Ω   8.1131 Ω   2.5825 nH</text>
<text x="19" y="428" fill="#ff00ff" font-family="'Liberation Mono', monospace" font-size="13.333" text-anchor="start" xml:space="preserve" > 3  1.0000000 GHz  50.008 Ω   15.825 Ω   2.5187 nH</text>
<text x="19" y="441" fill="#ff00ff" font-family="'Liberation Mono', monospace" font-size="13.333" text-anchor="start" xml:space="preserve" > 4  2.5000000 GHz  49.745 Ω   36.736 Ω   2.3387 nH</text>
<text x="19" y="454" fill="#ff00ff" font-family="'Liberation Mono', monospace" font-size="13.333" text-anchor="start" xml:space="preserve" > 5  5.0000000 GHz  58.162 Ω   83.481 Ω   2.6573 nH</text>
<text x="19" y="467" fill="#ff00ff" font-family="'Liberation Mono', monospace" font-size="13.333" text-anchor="start" xml:space="preserve" > 6  10.000000 GHz  1.0019 kΩ  2.9315 kΩ  46.656 nH</text>
<text x="19" y="480" fill="#ff00ff" font-family="'Liberation Mono', monospace" font-size="13.333" text-anchor="start" xml:space="preserve" > 7  20.000000 GHz  25.791 Ω  -65.476 Ω   121.54 fF</text>
<text x="19" y="493" fill="#ff00ff" font-family="'Liberation Mono', monospace" font-size="13.333" text-anchor="start" xml:space="preserve" >&gt;8  11.407179 GHz  4.5832 Ω  -648.46 Ω   21.516 fF</text>
<polyline points="221.50,531.00 221.57,530.07 221.65,529.14 221.74,528.21 221.82,527.28 221.91,526.34 222.00,525.41 222.10,524.48 222.20,523.55 222.30,522.62 222.42,521.70 222.54,520.77 222.66,519.85 222.80,518.93 222.95,518.00 223.12,517.07 223.29,516.15 223.48,515.22 223.67,514.30 223.88,513.38 224.10,512.47 224.33,511.57 224.58,510.67 224.83,509.78 225.09,508.91 225.37,508.04 225.66,507.17 225.97,506.29 226.30,505.42 226.64,504.55 227.00,503.69 227.37,502.82 227.76,501.96 228.16,501.10 228.57,500.24 228.99,499.38 229.43,498.53 229.87,497.69 230.33,496.85 230.79,496.01 231.27,495.18 231.75,494.36 232.25,493.54 232.75,492.73 233.25,491.92 233.77,491.13 234.28,490.34 234.81,489.56 235.34,488.79 235.87,488.03 236.41,487.28 236.95,486.53 237.49,485.80 238.04,485.08 238.59,484.36 239.16,483.62 239.74,482.86 240.35,482.09 240.96,481.31 241.59,480.54 242.24,479.76 242.90,479.00 243.57,478.24 244.25,477.50 244.95,476.79 245.65,476.10 246.37,475.44 247.10,474.82 247.83,474.24 248.58,473.71 249.33,473.23 250.09,472.80 250.85,472.43 251.62,472.12 252.40,471.88 253.20,471.65 254.01,471.42 254.84,471.19 255.68,470.98 256.54,470.76 257.42,470.55 258.30,470.35 259.20,470.15 260.11,469.96 261.03,469.78 261.96,469.60 262.89,469.42 263.84,469.26 264.79,469.10 265.75,468.95 266.71,468.80 267.68,468.67 268.64,468.54 269.62,468.42 270.59,468.31 271.56,468.20 272.54,468.11 273.51,468.03 274.48,467.95 275.44,467.88 276.41,467.83 277.36,467.78 278.32,467.74 279.26,467.72 280.20,467.70 281.13,467.70 282.06,467.71 282.99,467.72 283.93,467.74 284.87,467.77 285.81,467.80 286.76,467.84 287.71,467.89 288.65,467.95 289.60,468.01 290.56,468.08 291.51,468.15 292.46,468.23 293.41,468.32 294.36,468.41 295.31,468.50 296.26,468.61 297.21,468.71 298.15,468.83 299.09,468.94 300.03,469.06 300.97,469.19 301.90,469.32 302.83,469.45 303.75,469.59 304.67,469.73 305.59,469.87 306.50,470.02 307.40,470.17 308.29,470.32 309.18,470.48 310.07,470.64 310.94,470.80 311.81,470.96 312.67,471.14 313.53,471.34 314.39,471.58 315.26,471.84 316.12,472.13 316.98,472.45 317.84,472.79 318.70,473.16 319.55,473.55 320.40,473.97 321.25,474.40 322.10,474.85 322.94,475.32 323.78,475.81 324.61,476.31 325.44,476.83 326.26,477.36 327.08,477.91 327.88,478.46 328.68,479.03 329.48,479.60 330.26,480.18 331.04,480.77 331.81,481.36 332.57,481.96 333.32,482.56 334.06,483.16 334.79,483.76 335.50,484.36 336.21,484.95 336.90,485.55 337.59,486.14 338.25,486.72 338.92,487.32 339.58,487.94 340.24,488.57 340.90,489.21 341.55,489.87 342.20,490.55 342.84,491.23 343.47,491.93 344.10,492.64 344.73,493.36 345.34,494.10 345.95,494.84 346.55,495.59 347.14,496.35 347.73,497.11 348.30,497.88 348.86,498.66 349.41,499.45 349.95,500.24 350.48,501.03 351.00,501.83 351.50,502.63 351.99,503.43 352.47,504.23 352.93,505.03 353.38,505.84 353.81,506.64 354.23,507.44 354.66,508.26 355.10,509.08 355.55,509.91 356.00,510.75 356.46,511.59 356.91,512.45 357.35,513.31 357.79,514.17 358.22,515.05 358.64,515.93 359.03,516.81 359.41,517.70 359.77,518.59 360.10,519.48 360.41,520.38 360.68,521.28 360.92,522.18 361.12,523.08 361.28,523.98 361.40,524.89 361.47,525.79 361.50,526.69 361.50,527.60 361.50,528.51 361.50,529.42 361.49,530.34 361.49,531.26 361.49,532.19 361.48,533.12 361.47,534.05 361.47,534.99 361.46,535.92 361.45,536.86 361.44,537.81 361.43,538.75 361.42,539.69 361.41,540.64 361.40,541.59 361.38,542.53 361.37,543.48 361.36,544.42 361.34,545.37 361.33,546.31 361.31,547.25 361.29,548.19 361.27,549.13 361.26,550.07 361.24,551.00 361.22,551.93 361.20,552.85 361.16,553.78 361.11,554.71 361.04,555.65 360.95,556.58 360.84,557.52 360.72,558.46 360.58,559.40 360.43,560.34 360.27,561.28 360.09,562.21 359.90,563.15 359.70,564.08 359.49,565.01 359.27,565.94 359.04,566.86 358.81,567.77 358.56,568.69 358.32,569.59 358.06,570.49 357.81,571.38 357.54,572.26 357.28,573.13 357.01,573.99 356.75,574.85 356.47,575.70 356.18,576.55 355.86,577.42 355.51,578.28 355.15,579.16 354.77,580.03 354.37,580.91 353.95,581.79 353.51,582.66 353.05,583.53 352.58,584.40 352.09,585.27 351.59,586.13 351.07,586.98 350.55,587.82 350.00,588.65 349.45,589.47 348.89,590.28 348.31,591.07 347.73,591.85 347.14,592.62 346.54,593.36 345.93,594.09 345.32,594.79 344.70,595.48 344.08,596.14 343.45,596.78 342.82,597.39 342.19,597.98 341.55,598.54 340.92,599.07 340.27,599.58 339.60,600.08 338.91,600.58 338.20,601.07 337.47,601.56 336.73,602.03 335.96,602.50 335.18,602.96 334.39,603.41 333.58,603.86 332.75,604.29 331.92,604.72 331.07,605.15 330.21,605.56 329.34,605.97 328.46,606.37 327.57,606.76 326.68,607.15 325.78,607.53 324.87,607.90 323.96,608.26 323.04,608.62 322.12,608.97 321.19,609.31 320.27,609.64 319.34,609.97 318.41,610.29 317.49,610.60 316.56,610.91 315.64,611.21 314.72,611.50 313.80,611.79 312.89,612.07 311.99,612.34 311.09,612.60 310.20,612.86 309.32,613.11 308.44,613.36 307.55,613.61 306.67,613.85 305.78,614.10 304.89,614.34 304.01,614.59 303.12,614.83 302.23,615.07 301.34,615.31 300.44,615.55 299.55,615.79 298.65,616.03 297.76,616.26 296.86,616.49 295.96,616.72 295.06,616.95 294.16,617.17 293.26,617.40 292.35,617.62 291.45,617.84 290.54,618.05 289.64,618.27 288.73,618.48 287.82,618.68 286.91,618.89 286.00,619.09 285.08,619.29 284.17,619.49 283.25,619.68 282.33,619.87 281.42,620.05 280.50,620.23 279.57,620.41 278.65,620.59 277.73,620.76 276.80,620.92 275.88,621.09 274.95,621.24 274.02,621.40 273.09,621.55 272.16,621.69 271.22,621.84 270.29,621.97 269.35,622.10 268.42,622.23 267.48,622.35 266.54,622.47 265.60,622.58 264.65,622.69 263.71,622.79 262.76,622.89 261.81,622.98 260.87,623.06 259.92,623.14 258.96,623.21 258.01,623.28 257.06,623.34 256.10,623.40" fill="none" stroke="#ff00ff" stroke-width="1" />
<polygon points="221.00,529.50 222.00,529.50 225.50,541.50 217.50,541.50" fill="none" stroke="#ff00ff" stroke-width="1"/>
<text x="221" y="552" fill="#ff00ff" font-family="'Liberation Mono', monospace" font-size="13.333" text-anchor="middle" xml:space="preserve" >1</text>
<polygon points="222.00,520.50 223.00,520.50 226.50,532.50 218.50,532.50" fill="none" stroke="#ff00ff" stroke-width="1"/>
<text x="222" y="543" fill="#ff00ff" font-family="'Liberation Mono', monospace" font-size="13.333" text-anchor="middle" xml:space="preserve" >2</text>
<polygon points="225.00,509.50 226.00,509.50 229.50,521.50 221.50,521.50" fill="none" stroke="#ff00ff" stroke-width="1"/>
<text x="225" y="532" fill="#ff00ff" font-family="'Liberation Mono', monospace" font-size="13.333" text-anchor="middle" xml:space="preserve" >3</text>
<polygon points="238.00,485.50 239.00,485.50 242.50,497.50 234.50,497.50" fill="none" stroke="#ff00ff" stroke-width="1"/>
<text x="238" y="508" fill="#ff00ff" font-family="'Liberation Mono', monospace" font-size="13.333" text-anchor="middle" xml:space="preserve" >4</text>
<polygon points="281.00,468.50 282.00,468.50 285.50,480.50 277.50,480.50" fill="none" stroke="#ff00ff" stroke-width="1"/>
<text x="281" y="491" fill="#ff00ff" font-family="'Liberation Mono', monospace" font-size="13.333" text-anchor="middle" xml:space="preserve" >5</text>
<polygon points="361.00,527.50 362.00,527.50 365.50,539.50 357.50,539.50" fill="none" stroke="#ff00ff" stroke-width="1"/>
<text x="361" y="550" fill="#ff00ff" font-family="'Liberation Mono', monospace" font-size="13.333" text-anchor="middle" xml:space="preserve" >6</text>
<polygon points="256.00,623.50 257.00,623.50 260.50,635.50 252.50,635.50" fill="none" stroke="#ff00ff" stroke-width="1"/>
<text x="256" y="646" fill="#ff00ff" font-family="'Liberation Mono', monospace" font-size="13.333" text-anchor="middle" xml:space="preserve" >7</text>
<polygon points="361.00,553.50 362.00,553.50 365.50,541.50 357.50,541.50" fill="none" stroke="#ff00ff" stroke-width="1"/>
<text x="361" y="538" fill="#ff00ff" font-family="'Liberation Mono', monospace" font-size="13.333" text-anchor="middle" xml:space="preserve" >8</text>
<g clip-path="url(#clipdisp)">
<polygon points="15.55,673.00 22.55,680.00 8.55,680.00" fill="none" stroke="#ff00ff" stroke-width="1"/>
<polygon points="23.91,673.00 30.91,680.00 16.91,680.00" fill="none" stroke="#ff00ff" stroke-width="1"/>
<polygon points="34.36,673.00 41.36,680.00 27.36,680.00" fill="none" stroke="#ff00ff" stroke-width="1"/>
<polygon points="65.71,673.00 72.71,680.00 58.71,680.00" fill="none" stroke="#ff00ff" stroke-width="1"/>
<polygon points="117.97,673.00 124.97,680.00 110.97,680.00" fill="none" stroke="#ff00ff" stroke-width="1"/>
<polygon points="222.48,673.00 229.48,680.00 215.48,680.00" fill="none" stroke="#ff00ff" stroke-width="1"/>
<polygon points="431.50,673.00 438.50,680.00 424.50,680.00" fill="none" stroke="#ff00ff" stroke-width="1"/>
<polygon points="251.89,673.00 258.89,680.00 244.89,680.00" fill="#ff00ff" stroke="#ff00ff" stroke-width="0.5"/>
</g>
<rect x="881" y="47" width="2" height="637" fill="#e8e8e8" />
<rect x="883" y="44" width="2" height="641" fill="#909090" />
<rect x="885" y="43" width="139" height="662" fill="#000000" />
<rect x="886" y="323" width="137" height="381" fill="#2e2e2e" />
<rect x="886" y="323" width="137" height="380" fill="#787878" />
<rect x="886" y="323" width="136" height="379" fill="#505050" />
<rect x="886" y="323" width="1" height="379" fill="#383838" />
<rect x="886" y="323" width="136" height="1" fill="#383838" />
<rect x="886" y="44" width="137" height="33" fill="#000030" />
<rect x="886" y="44" width="136" height="31" fill="#9898d0" />
<rect x="887" y="45" width="135" height="30" fill="#33335f" />
<rect x="886" y="75" width="137" height="2" fill="#000030" />
<text x="954.5" y="64.3" fill="#ffffff" font-family="'Liberation Sans', sans-serif" font-size="12" text-anchor="middle" xml:space="preserve" >S2P</text>
<rect x="886" y="78" width="137" height="34" fill="#909090" />
<rect x="886" y="78" width="136" height="32" fill="#f0f0f0" />
<rect x="887" y="79" width="135" height="31" fill="#b4b4b4" />
<text x="954.5" y="98.8" fill="#000000" font-family="'Liberation Sans', sans-serif" font-size="12" text-anchor="middle" xml:space="preserve" letter-spacing="0.5" word-spacing="1.5">[ 1-2 ]...</text>
<rect x="886" y="113" width="137" height="34" fill="#909090" />
<rect x="886" y="113" width="136" height="32" fill="#f0f0f0" />
<rect x="887" y="114" width="135" height="31" fill="#b4b4b4" />
<text x="954.5" y="133.8" fill="#000000" font-family="'Liberation Sans', sans-serif" font-size="12" text-anchor="middle" xml:space="preserve" letter-spacing="0.5" word-spacing="1.5">[ 1-3 ]...</text>
<rect x="886" y="148" width="137" height="34" fill="#909090" />
<rect x="886" y="148" width="136" height="32" fill="#f0f0f0" />
<rect x="887" y="149" width="135" height="31" fill="#b4b4b4" />
<text x="954.5" y="168.8" fill="#000000" font-family="'Liberation Sans', sans-serif" font-size="12" text-anchor="middle" xml:space="preserve" letter-spacing="0.5" word-spacing="1.5">[ 1-4 ]...</text>
<rect x="886" y="183" width="137" height="34" fill="#909090" />
<rect x="886" y="183" width="136" height="32" fill="#f0f0f0" />
<rect x="887" y="184" width="135" height="31" fill="#b4b4b4" />
<text x="954.5" y="203.8" fill="#000000" font-family="'Liberation Sans', sans-serif" font-size="12" text-anchor="middle" xml:space="preserve" letter-spacing="0.5" word-spacing="1.5">[ 2-3 ]...</text>
<rect x="886" y="218" width="137" height="34" fill="#909090" />
<rect x="886" y="218" width="136" height="32" fill="#f0f0f0" />
<rect x="887" y="219" width="135" height="31" fill="#b4b4b4" />
<text x="954.5" y="238.8" fill="#000000" font-family="'Liberation Sans', sans-serif" font-size="12" text-anchor="middle" xml:space="preserve" letter-spacing="0.5" word-spacing="1.5">[ 2-4 ]...</text>
<rect x="886" y="253" width="137" height="31" fill="#303030" />
<rect x="886" y="253" width="136" height="29" fill="#707070" />
<rect x="887" y="254" width="135" height="28" fill="#505050" />
<text x="954.5" y="272.3" fill="#ffffff" font-family="'Liberation Sans', sans-serif" font-size="12" text-anchor="middle" xml:space="preserve" letter-spacing="0.5" word-spacing="1.5">[ 3-4 ]...</text>
<rect x="886" y="286" width="137" height="1" fill="#a0a0e0" />
<rect x="886" y="287" width="137" height="2" fill="#101050" />
<rect x="886" y="286" width="1" height="3" fill="#a0a0e0" />
<rect x="886" y="290" width="137" height="31" fill="#909090" />
<rect x="886" y="290" width="136" height="29" fill="#f0f0f0" />
<rect x="887" y="291" width="135" height="28" fill="#b4b4b4" />
<text x="954.5" y="309.3" fill="#000000" font-family="'Liberation Sans', sans-serif" font-size="12" text-anchor="middle" xml:space="preserve" >Return</text>
<rect x="0" y="684" width="884" height="2" fill="#e8e8e8" />
<rect x="0" y="686" width="884" height="17" fill="#b4b4b4" />
<rect x="0" y="703" width="1024" height="2" fill="#101010" />
<rect x="0" y="684" width="2" height="19" fill="#e0e0e0" />
<rect x="2" y="686" width="16" height="16" fill="#e8e8e8" />
<rect x="3" y="687" width="14" height="14" fill="#cccccc" />
<text x="6" y="699" fill="#000000" font-family="'Liberation Sans', sans-serif" font-size="12" text-anchor="start" xml:space="preserve" >1</text>
<text x="21" y="699" fill="#000000" font-family="'Liberation Sans', sans-serif" font-size="12" text-anchor="start" xml:space="preserve" >Start 50 MHz</text>
<text x="372" y="699" fill="#000000" font-family="'Liberation Sans', sans-serif" font-size="12" text-anchor="start" xml:space="preserve" >IFBW 70 kHz</text>
<text x="722" y="699" fill="#000000" font-family="'Liberation Sans', sans-serif" font-size="12" text-anchor="start" xml:space="preserve" >Stop 20 GHz</text>
<rect x="797" y="687" width="45" height="14" fill="#3c3c7c" />
<text x="819.5" y="699" fill="#ffffff" font-family="'Liberation Sans', sans-serif" font-size="12" text-anchor="middle" xml:space="preserve" >16/16</text>
<rect x="844" y="687" width="25" height="14" fill="#3c3c7c" />
<text x="856.5" y="699" fill="#ffffff" font-family="'Liberation Sans', sans-serif" font-size="12" text-anchor="middle" xml:space="preserve" >Cor</text>
<rect x="871" y="687" width="10" height="14" fill="#d4d4d4" />
<rect x="0" y="705" width="1024" height="21" fill="#686868" />
<rect x="2" y="706" width="1022" height="20" fill="#505050" />
<rect x="0" y="726" width="1024" height="2" fill="#101010" />
<rect x="705" y="706" width="46" height="19" fill="#5c5c5c" />
<rect x="706" y="707" width="44" height="17" fill="#3c3c7c" />
<text x="728.0" y="721.5" fill="#ffffff" font-family="'Liberation Sans', sans-serif" font-size="16" text-anchor="middle" xml:space="preserve" >Hold</text>
<rect x="753" y="706" width="39" height="19" fill="#5c5c5c" />
<rect x="754" y="707" width="37" height="17" fill="#404040" />
<text x="772.5" y="721.5" fill="#808080" font-family="'Liberation Sans', sans-serif" font-size="16" text-anchor="middle" xml:space="preserve" >Stop</text>
<rect x="794" y="706" width="52" height="19" fill="#5c5c5c" />
<rect x="795" y="707" width="50" height="17" fill="#404040" />
<text x="820.0" y="721.5" fill="#808080" font-family="'Liberation Sans', sans-serif" font-size="16" text-anchor="middle" xml:space="preserve" >ExtRef</text>
<rect x="848" y="706" width="31" height="19" fill="#5c5c5c" />
<rect x="849" y="707" width="29" height="17" fill="#404040" />
<text x="863.5" y="721.5" fill="#808080" font-family="'Liberation Sans', sans-serif" font-size="16" text-anchor="middle" xml:space="preserve" >Svc</text>
<rect x="881" y="706" width="140" height="19" fill="#5c5c5c" />
<rect x="882" y="707" width="138" height="17" fill="#404040" />
<text x="951.0" y="721.5" fill="#ffffff" font-family="'Liberation Sans', sans-serif" font-size="16.8" text-anchor="middle" xml:space="preserve" >2021-12-16 16:26</text></svg></body></html>
